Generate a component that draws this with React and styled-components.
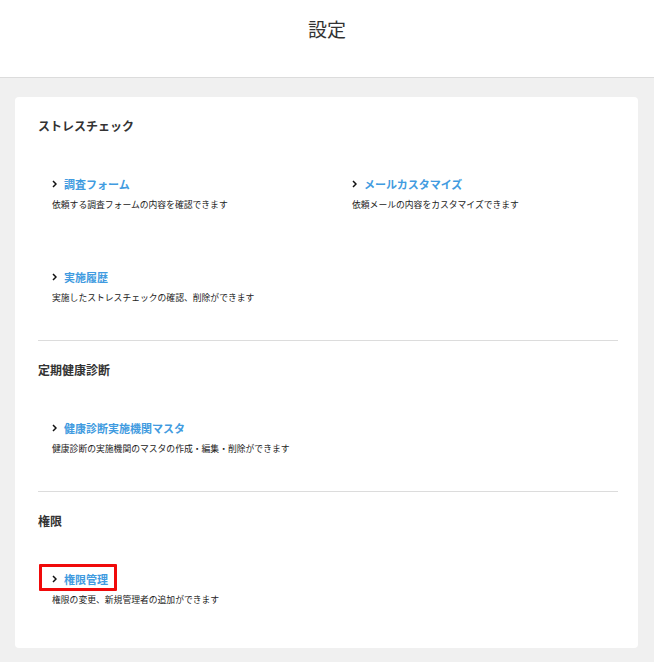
import React from "react";
import styled, { createGlobalStyle } from "styled-components";

const GlobalStyle = createGlobalStyle`
  html, body {
    margin: 0;
    padding: 0;
    background: #f0f0f0;
    font-family: "Noto Sans CJK JP", "Noto Sans", sans-serif;
    color: #333;
  }
`;

const Header = styled.header`
  height: 77px;
  background: #fff;
  border-bottom: 1px solid #dcdcdc;
  display: flex;
  align-items: flex-start;
  justify-content: center;

  h1 {
    margin: 17px 0 0;
    font-size: 19px;
    font-weight: 400;
    line-height: 24px;
    color: #333;
  }
`;

const Main = styled.main`
  padding: 19px 16px 14px 15px;
`;

const Card = styled.div`
  background: #fff;
  border-radius: 4px;
  padding: 0 20px 6px 23px;
`;

const Section = styled.section`
  padding: 22px 0 36px;
  border-bottom: 1px solid #dcdcdc;

  &:last-child {
    border-bottom: none;
  }
`;

const SectionTitle = styled.h2`
  margin: 0 0 43px;
  font-size: 12px;
  line-height: 14px;
  font-weight: 700;
  color: #333;
`;

const Items = styled.div`
  display: grid;
  grid-template-columns: 300px 1fr;
  row-gap: 58px;
  padding-left: 14px;
`;

const Item = styled.div`
  display: flex;
  flex-direction: column;
  gap: 7px;
`;

const LinkRow = styled.a`
  position: relative;
  align-self: flex-start;
  display: flex;
  align-items: center;
  gap: 7px;
  height: 16px;
  font-size: 11px;
  font-weight: 700;
  color: #419be0;
  text-decoration: none;
  cursor: pointer;

  svg {
    flex: none;
  }

  ${({ $highlight }) =>
    $highlight &&
    `
    &::after {
      content: "";
      position: absolute;
      top: -7px;
      bottom: -4px;
      left: -13px;
      right: -9px;
      border: 3px solid #f00a0a;
      border-radius: 1px;
    }
  `}
`;

const Desc = styled.p`
  margin: 0;
  font-size: 8.8px;
  line-height: 12px;
  color: #222;
`;

const Chevron = () => (
  <svg width="5" height="8" viewBox="0 0 5 8">
    <polyline
      points="1,1 4,4 1,7"
      fill="none"
      stroke="#111"
      strokeWidth="1.5"
    />
  </svg>
);

const sections = [
  {
    title: "ストレスチェック",
    items: [
      { label: "調査フォーム", desc: "依頼する調査フォームの内容を確認できます" },
      { label: "メールカスタマイズ", desc: "依頼メールの内容をカスタマイズできます" },
      { label: "実施履歴", desc: "実施したストレスチェックの確認、削除ができます" },
    ],
  },
  {
    title: "定期健康診断",
    items: [
      {
        label: "健康診断実施機関マスタ",
        desc: "健康診断の実施機関のマスタの作成・編集・削除ができます",
      },
    ],
  },
  {
    title: "権限",
    items: [
      {
        label: "権限管理",
        desc: "権限の変更、新規管理者の追加ができます",
        highlight: true,
      },
    ],
  },
];

export default function App() {
  return (
    <>
      <GlobalStyle />
      <Header>
        <h1>設定</h1>
      </Header>
      <Main>
        <Card>
          {sections.map((s) => (
            <Section key={s.title}>
              <SectionTitle>{s.title}</SectionTitle>
              <Items>
                {s.items.map((it) => (
                  <Item key={it.label}>
                    <LinkRow $highlight={it.highlight}>
                      <Chevron />
                      {it.label}
                    </LinkRow>
                    <Desc>{it.desc}</Desc>
                  </Item>
                ))}
              </Items>
            </Section>
          ))}
        </Card>
      </Main>
    </>
  );
}
